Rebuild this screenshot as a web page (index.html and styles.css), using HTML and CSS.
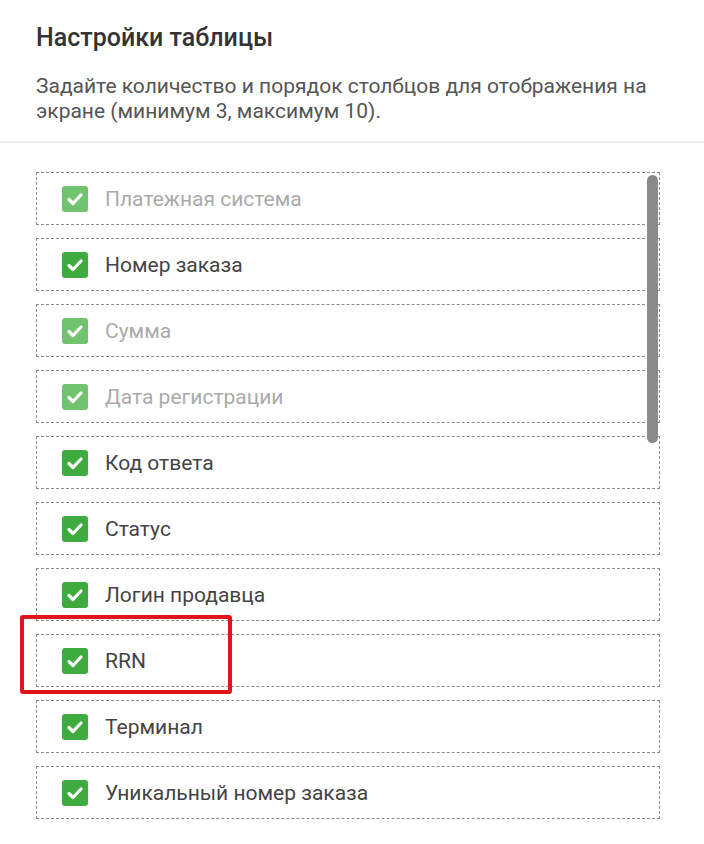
FILE: index.html
```html
<!DOCTYPE html>
<html lang="ru">
<head>
<meta charset="utf-8">
<link rel="stylesheet" href="styles.css">
</head>
<body>
<div class="panel">
  <div class="head">
    <h1 class="title">Настройки таблицы</h1>
    <p class="desc">Задайте количество и порядок столбцов для отображения на экране (минимум 3, максимум 10).</p>
  </div>
  <div class="list-wrap">
    <ul class="list">
      <li class="row disabled"><span class="cb"><svg viewBox="0 0 26 26"><path d="M7 13.5l4 4 8-8.5" /></svg></span><span class="label">Платежная система</span></li>
      <li class="row"><span class="cb"><svg viewBox="0 0 26 26"><path d="M7 13.5l4 4 8-8.5" /></svg></span><span class="label">Номер заказа</span></li>
      <li class="row disabled"><span class="cb"><svg viewBox="0 0 26 26"><path d="M7 13.5l4 4 8-8.5" /></svg></span><span class="label">Сумма</span></li>
      <li class="row disabled"><span class="cb"><svg viewBox="0 0 26 26"><path d="M7 13.5l4 4 8-8.5" /></svg></span><span class="label">Дата регистрации</span></li>
      <li class="row"><span class="cb"><svg viewBox="0 0 26 26"><path d="M7 13.5l4 4 8-8.5" /></svg></span><span class="label">Код ответа</span></li>
      <li class="row"><span class="cb"><svg viewBox="0 0 26 26"><path d="M7 13.5l4 4 8-8.5" /></svg></span><span class="label">Статус</span></li>
      <li class="row"><span class="cb"><svg viewBox="0 0 26 26"><path d="M7 13.5l4 4 8-8.5" /></svg></span><span class="label">Логин продавца</span></li>
      <li class="row highlighted"><span class="cb"><svg viewBox="0 0 26 26"><path d="M7 13.5l4 4 8-8.5" /></svg></span><span class="label">RRN</span></li>
      <li class="row"><span class="cb"><svg viewBox="0 0 26 26"><path d="M7 13.5l4 4 8-8.5" /></svg></span><span class="label">Терминал</span></li>
      <li class="row"><span class="cb"><svg viewBox="0 0 26 26"><path d="M7 13.5l4 4 8-8.5" /></svg></span><span class="label">Уникальный номер заказа</span></li>
    </ul>
    <div class="scrollbar"></div>
  </div>
</div>
</body>
</html>
```

FILE: styles.css
```css
*, *::before, *::after { box-sizing: border-box; }
html, body { margin: 0; padding: 0; background: #fff; }
body { font-family: Roboto, "Noto Sans", sans-serif; }
.panel { width: 704px; }
.head { padding: 22px 36px 17px 36px; border-bottom: 2px solid #ececec; }
.title { margin: 0; font-size: 25px; font-weight: 500; color: #333; line-height: 32px; }
.desc { margin: 20px 0 0 0; font-size: 21px; line-height: 25px; color: #555; }
.list-wrap { position: relative; padding: 29px 44px 20px 36px; }
.list { list-style: none; margin: 0; padding: 0; display: flex; flex-direction: column; gap: 13px; }
.row { height: 53px; border: 1px dashed #8a8a8a; display: flex; align-items: center; padding-left: 25px; gap: 17px; font-size: 21px; color: #444; position: relative; }
.cb { width: 26px; height: 26px; border-radius: 3px; background: #3eab3e; display: flex; align-items: center; justify-content: center; flex: none; }
.cb svg { width: 26px; height: 26px; fill: none; stroke: #fff; stroke-width: 3.2; stroke-linecap: round; stroke-linejoin: round; }
.disabled .cb { background: #72c36f; }
.disabled .label { color: #aaa; }
.highlighted::before { content: ""; position: absolute; left: -17px; top: -20px; width: 212px; height: 79px; border: 4px solid #e0141c; border-radius: 3px; }
.scrollbar { position: absolute; left: 647px; top: 32px; width: 11px; height: 268px; border-radius: 6px; background: #8a8a8a; }
```
